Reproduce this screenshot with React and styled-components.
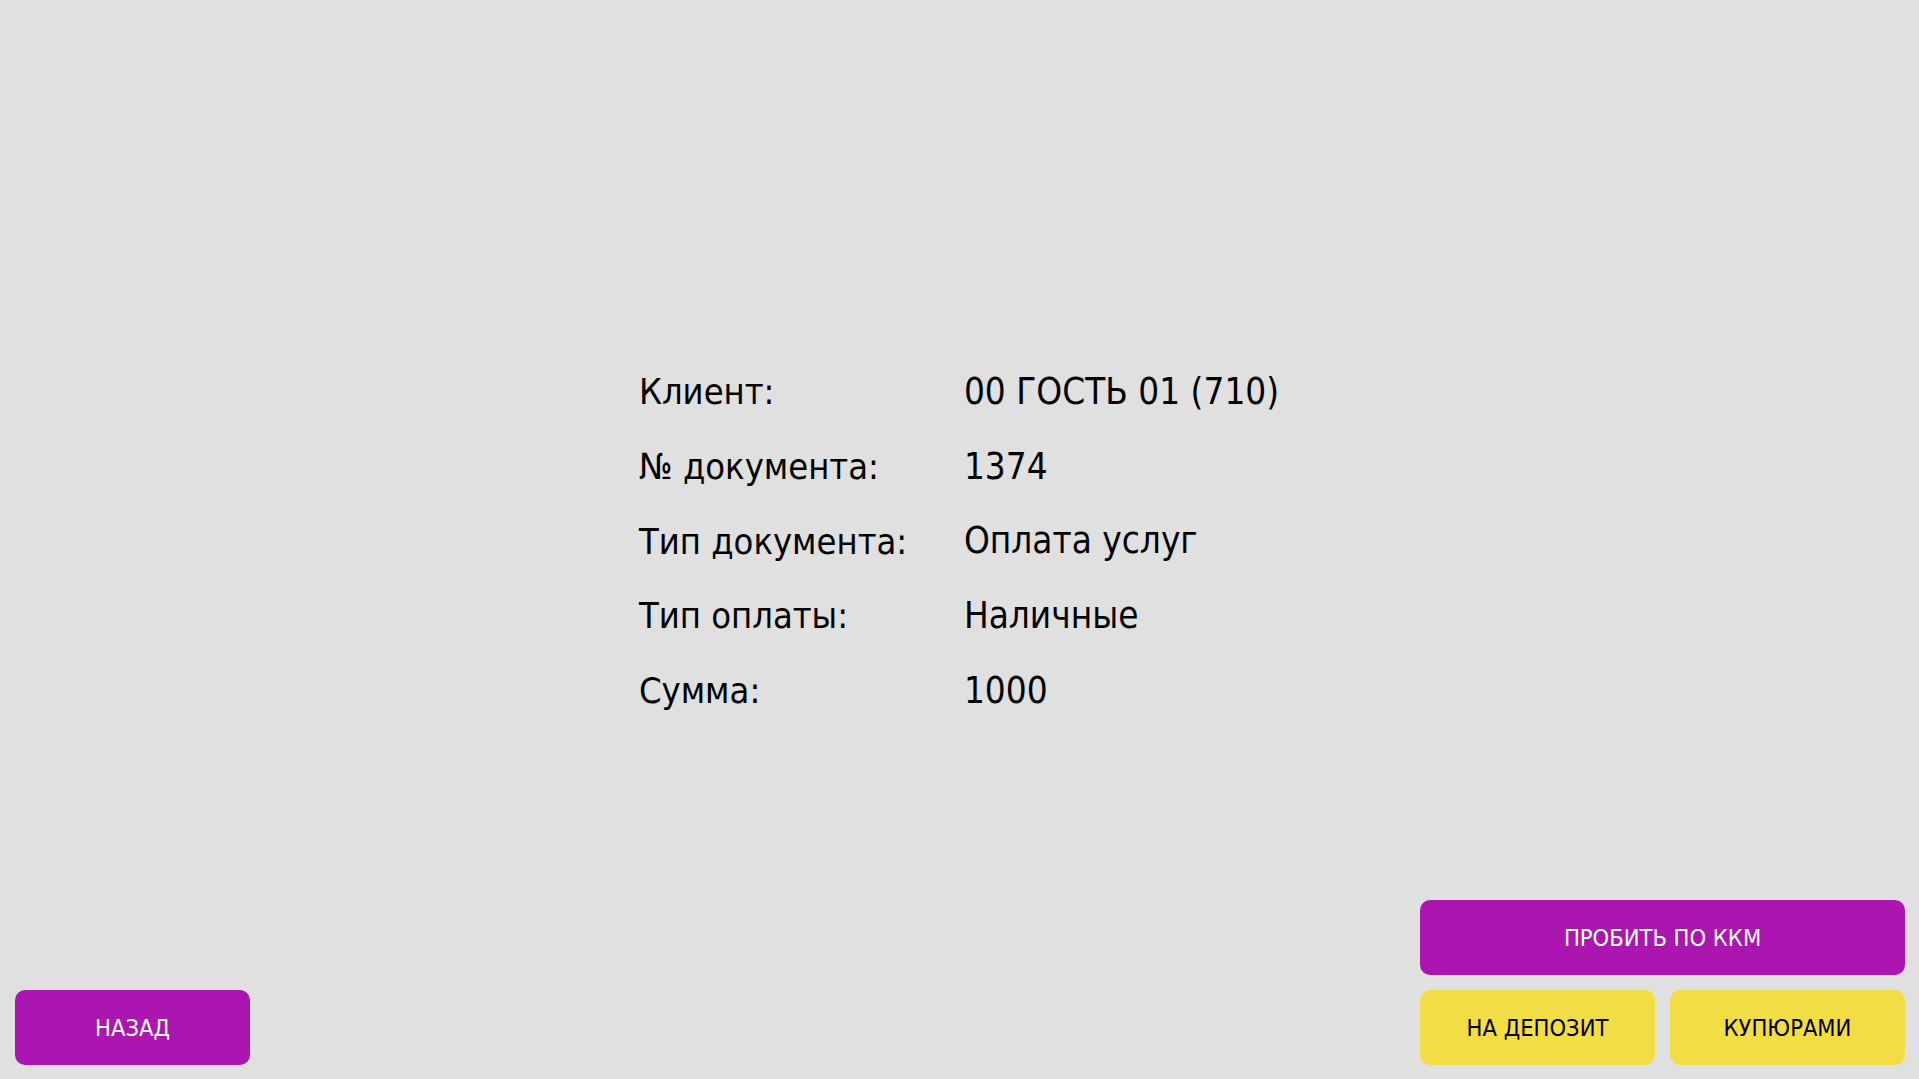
import React from "react"
import styled, { createGlobalStyle } from "styled-components"

const GlobalStyle = createGlobalStyle`
  html, body {
    margin: 0;
    padding: 0;
    background-color: #e0e0e0;
  }
  body {
    font-family: "DejaVu Sans Condensed", "DejaVu Sans", sans-serif;
    font-stretch: condensed;
  }
`

const Page = styled.div`
  height: 100vh;
  display: grid;
  grid-template-rows: 1fr auto 1fr;
  background-color: #e0e0e0;
`

const Info = styled.div`
  grid-row: 2;
  justify-self: center;
  display: grid;
  grid-template-columns: 325px auto;
  grid-auto-rows: 74.7px;
  align-items: center;
  margin: 4px 1px 0 0;
  font-size: 36px;
  color: #000;
`

const Cell = styled.div`
  white-space: nowrap;
  line-height: 1;
  font-size: ${({ $value }) => ($value ? "36.6px" : "36px")};
`

const Footer = styled.div`
  grid-row: 3;
  align-self: end;
  display: flex;
  justify-content: space-between;
  align-items: flex-end;
  padding: 15px 14px 14px 15px;
`

const Actions = styled.div`
  display: grid;
  grid-template-columns: 235px 235px;
  gap: 15px;
`

const Button = styled.button`
  width: ${({ $wide }) => ($wide ? "485px" : "235px")};
  grid-column: ${({ $wide }) => ($wide ? "span 2" : "auto")};
  height: 75px;
  border: none;
  border-radius: 10px;
  background-color: ${({ $yellow }) => ($yellow ? "#f3dd44" : "#ab15b0")};
  color: ${({ $yellow }) => ($yellow ? "#000" : "#fff")};
  font-family: "DejaVu Sans Condensed", "DejaVu Sans", sans-serif;
  font-stretch: condensed;
  font-size: 23.5px;
  cursor: pointer;
  padding: 0;
`

const rows = [
  ["Клиент:", "00 ГОСТЬ 01 (710)"],
  ["№ документа:", "1374"],
  ["Тип документа:", "Оплата услуг"],
  ["Тип оплаты:", "Наличные"],
  ["Сумма:", "1000"],
]

const App = () => {
  return (
    <>
      <GlobalStyle />
      <Page>
        <Info>
          {rows.map(([label, value]) => (
            <React.Fragment key={label}>
              <Cell>{label}</Cell>
              <Cell $value>{value}</Cell>
            </React.Fragment>
          ))}
        </Info>
        <Footer>
          <Button>НАЗАД</Button>
          <Actions>
            <Button $wide>ПРОБИТЬ ПО ККМ</Button>
            <Button $yellow>НА ДЕПОЗИТ</Button>
            <Button $yellow>КУПЮРАМИ</Button>
          </Actions>
        </Footer>
      </Page>
    </>
  )
}

export default App
